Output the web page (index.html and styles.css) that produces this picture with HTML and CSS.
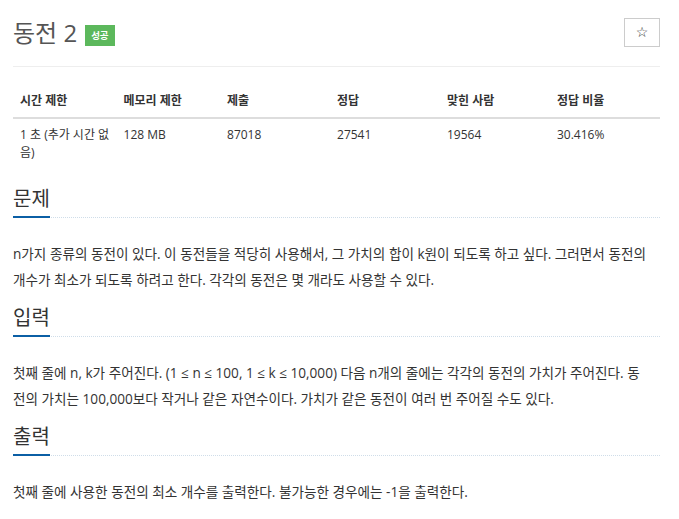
FILE: index.html
```html
<!DOCTYPE html>
<html lang="ko">
<head>
<meta charset="utf-8">
<link rel="stylesheet" href="styles.css">
</head>
<body>
<div class="page">
  <div class="page-header">
    <h1 class="title">
      <span class="title-text">동전 2</span>
      <span class="badge">성공</span>
    </h1>
    <button class="star-btn" type="button">☆</button>
  </div>

  <table class="info-table">
    <thead>
      <tr>
        <th class="c16">시간 제한</th>
        <th class="c16">메모리 제한</th>
        <th class="c17">제출</th>
        <th class="c17">정답</th>
        <th class="c17">맞힌 사람</th>
        <th class="c17">정답 비율</th>
      </tr>
    </thead>
    <tbody>
      <tr>
        <td>1 초 (추가 시간 없음)</td>
        <td>128 MB</td>
        <td>87018</td>
        <td>27541</td>
        <td>19564</td>
        <td>30.416%</td>
      </tr>
    </tbody>
  </table>

  <section class="section">
    <div class="headline"><h2><span>문제</span></h2></div>
    <p class="text">n가지 종류의 동전이 있다. 이 동전들을 적당히 사용해서, 그 가치의 합이 k원이 되도록 하고 싶다. 그러면서 동전의 개수가 최소가 되도록 하려고 한다. 각각의 동전은 몇 개라도 사용할 수 있다.</p>
  </section>

  <section class="section">
    <div class="headline"><h2><span>입력</span></h2></div>
    <p class="text">첫째 줄에 n, k가 주어진다. (1 ≤ n ≤ 100, 1 ≤ k ≤ 10,000) 다음 n개의 줄에는 각각의 동전의 가치가 주어진다. 동전의 가치는 100,000보다 작거나 같은 자연수이다. 가치가 같은 동전이 여러 번 주어질 수도 있다.</p>
  </section>

  <section class="section">
    <div class="headline"><h2><span>출력</span></h2></div>
    <p class="text">첫째 줄에 사용한 동전의 최소 개수를 출력한다. 불가능한 경우에는 -1을 출력한다.</p>
  </section>
</div>
</body>
</html>
```

FILE: styles.css
```css
* { box-sizing: border-box; }
html, body {
  margin: 0;
  padding: 0;
  background: #fff;
}
body {
  font-family: "Open Sans", "Noto Sans CJK KR", sans-serif;
  color: #333;
  font-size: 13px;
}
.page {
  width: 647px;
  margin-left: 13px;
}
.page-header {
  display: flex;
  align-items: flex-start;
  justify-content: space-between;
  border-bottom: 1px solid #eee;
  padding-top: 18px;
  padding-bottom: 18px;
  margin-bottom: 20px;
}
.title {
  margin: 0;
  display: flex;
  align-items: center;
  gap: 8px;
  font-weight: 400;
  font-size: 24px;
  line-height: 30px;
  color: #555;
}
.badge {
  display: inline-block;
  background: #5cb85c;
  color: #fff;
  font-size: 9.5px;
  font-weight: 700;
  line-height: 21px;
  height: 21px;
  padding: 0 6px;
  margin-top: 4px;
}
.star-btn {
  width: 36px;
  height: 29px;
  border: 1px solid #ccc;
  background: #fff;
  color: #333;
  font-size: 14px;
  padding: 0;
  margin: 0;
  font-family: "DejaVu Sans", sans-serif;
  line-height: 27px;
}
.info-table {
  width: 100%;
  border-collapse: collapse;
  border-spacing: 0;
  margin-bottom: 14px;
}
.info-table th,
.info-table td {
  text-align: left;
  vertical-align: top;
  padding: 7px 7px 8px;
  font-size: 12px;
  line-height: 18px;
}
.info-table th {
  font-weight: 700;
  border-bottom: 2px solid #ddd;
  padding-top: 5px;
  padding-bottom: 7px;
}
.c16 { width: 16%; }
.c17 { width: 17%; }
.section {
  margin: 0;
}
.headline {
  margin-bottom: 23px;
}
.headline h2 {
  margin: 0;
  font-size: 20px;
  font-weight: 400;
  line-height: 30px;
  color: #333;
  border-bottom: 1px dotted #cfdde9;
  display: flex;
}
.headline h2 span {
  display: inline-block;
  border-bottom: 2px solid #0b5fa5;
  margin-bottom: -1px;
  padding-bottom: 2px;
}
.text {
  width: 634px;
  margin: 0 0 10px 0;
  font-size: 13.6px;
  line-height: 26px;
  color: #333;
}
```
